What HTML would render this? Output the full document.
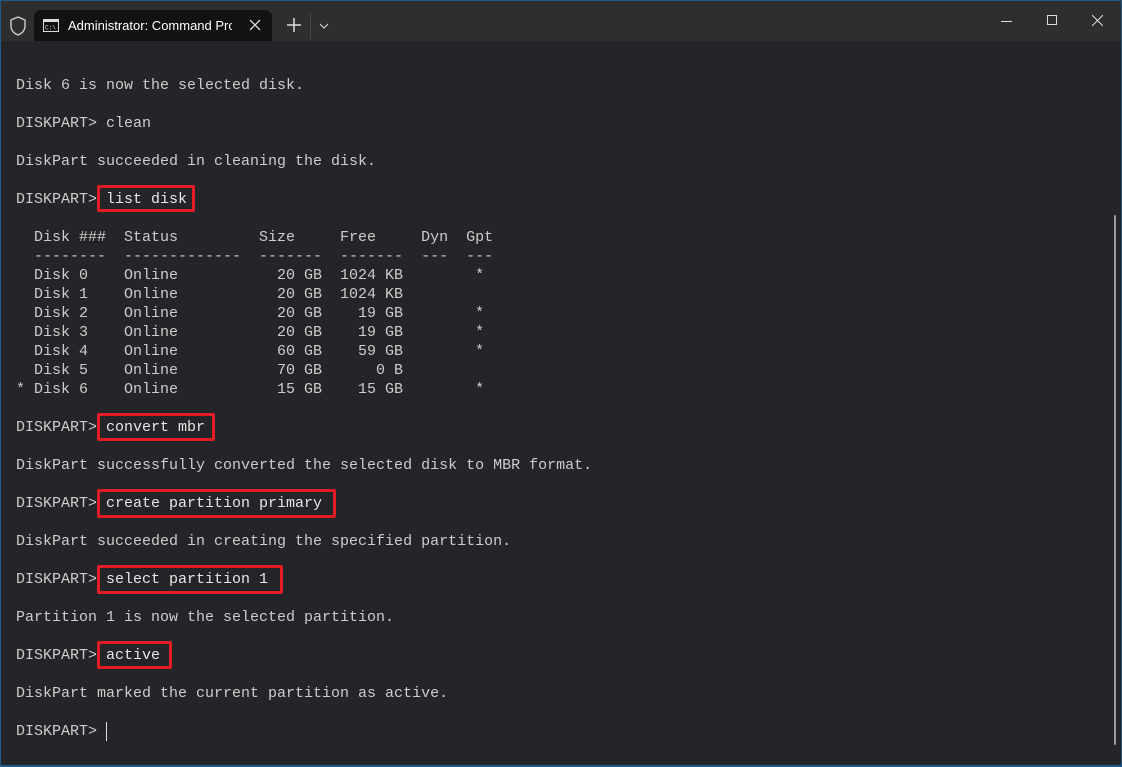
<!DOCTYPE html>
<html><head><style>
html,body{margin:0;padding:0;width:1122px;height:767px;overflow:hidden;background:#1f5a8c}
.win{position:absolute;left:1px;top:1px;width:1120px;height:764px;background:#242528;overflow:hidden}
.tb{position:absolute;left:0;top:0;width:1120px;height:40px;background:#2e2e2e}
.tab{position:absolute;left:33px;top:9px;width:238px;height:31px;background:#121212;border-radius:7px 7px 0 0}
.tabt{position:absolute;left:34px;top:8px;color:#fff;font:13px "Liberation Sans",sans-serif;white-space:nowrap;width:164px;overflow:hidden}
pre{position:absolute;left:15px;top:75px;margin:0;font:15px/19px "Liberation Mono",monospace;color:#cccccc}
.box{position:absolute;border:3px solid #e21d26;box-sizing:border-box;border-radius:2px}
.w{color:#e6e6e6}
</style></head><body>
<div class="win">
<div class="tb">
<svg style="position:absolute;left:8px;top:15px" width="18" height="20" viewBox="0 0 18 20"><path d="M9 1 L16 4 V10 C16 15 12 18 9 19 C6 18 2 15 2 10 V4 Z" fill="none" stroke="#ccc" stroke-width="1.4"/></svg>
<div class="tab">
<svg style="position:absolute;left:9px;top:9px" width="16" height="13" viewBox="0 0 16 13"><rect x="0.5" y="0.5" width="15" height="12" fill="#111" stroke="#ddd"/><rect x="1" y="1" width="14" height="2" fill="#ddd"/><text x="2" y="10.5" font-size="6" fill="#ddd" font-family="Liberation Mono">C:\</text></svg>
<div class="tabt">Administrator: Command Prompt</div>
<svg style="position:absolute;left:215px;top:9px" width="12" height="12" viewBox="0 0 12 12"><path d="M1 1L11 11M11 1L1 11" stroke="#ddd" stroke-width="1.3"/></svg>
</div>
<svg style="position:absolute;left:286px;top:17px" width="14" height="14" viewBox="0 0 14 14"><path d="M7 0V14M0 7H14" stroke="#ddd" stroke-width="1.5"/></svg>
<div style="position:absolute;left:309px;top:12px;width:1px;height:26px;background:#444"></div>
<svg style="position:absolute;left:318px;top:22px" width="10" height="6" viewBox="0 0 10 6"><path d="M1 1L5 5L9 1" stroke="#ccc" stroke-width="1.2" fill="none"/></svg>
<div style="position:absolute;left:1000px;top:20px;width:11px;height:1px;background:#ddd"></div>
<div style="position:absolute;left:1046px;top:14px;width:8px;height:8px;border:1px solid #ddd"></div>
<svg style="position:absolute;left:1091px;top:14px" width="11" height="11" viewBox="0 0 11 11"><path d="M0 0L11 11M11 0L0 11" stroke="#ddd" stroke-width="1"/></svg>
</div>
<pre>Disk 6 is now the selected disk.

DISKPART&gt; clean

DiskPart succeeded in cleaning the disk.

DISKPART&gt; <span class="w">list disk</span>

  Disk ###  Status         Size     Free     Dyn  Gpt
  --------  -------------  -------  -------  ---  ---
  Disk 0    Online           20 GB  1024 KB        *
  Disk 1    Online           20 GB  1024 KB
  Disk 2    Online           20 GB    19 GB        *
  Disk 3    Online           20 GB    19 GB        *
  Disk 4    Online           60 GB    59 GB        *
  Disk 5    Online           70 GB      0 B
* Disk 6    Online           15 GB    15 GB        *

DISKPART&gt; <span class="w">convert mbr</span>

DiskPart successfully converted the selected disk to MBR format.

DISKPART&gt; <span class="w">create partition primary</span>

DiskPart succeeded in creating the specified partition.

DISKPART&gt; <span class="w">select partition 1</span>

Partition 1 is now the selected partition.

DISKPART&gt; <span class="w">active</span>

DiskPart marked the current partition as active.

DISKPART&gt; </pre>
<div style="position:absolute;left:105px;top:721px;width:1px;height:19px;background:#ddd"></div>
<div class="box" style="left:96px;top:184px;width:98px;height:27px"></div>
<div class="box" style="left:96px;top:412px;width:118px;height:28px"></div>
<div class="box" style="left:96px;top:488px;width:239px;height:29px"></div>
<div class="box" style="left:96px;top:564px;width:186px;height:29px"></div>
<div class="box" style="left:96px;top:640px;width:75px;height:28px"></div>
<div style="position:absolute;left:1113px;top:214px;width:2px;height:530px;background:#9a9a9a;border-radius:1px"></div>
</div>
</body></html>
